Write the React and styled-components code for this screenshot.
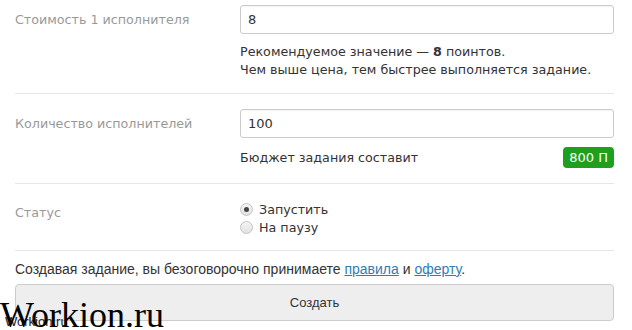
import React from "react";
import styled, { createGlobalStyle } from "styled-components";

const Global = createGlobalStyle`
  html, body { margin: 0; padding: 0; background: #fff; }
  body { width: 632px; height: 330px; overflow: hidden; }
`;

const Page = styled.div`
  position: relative;
  width: 632px;
  height: 330px;
  padding: 0 18px 0 15px;
  box-sizing: border-box;
  font-family: "DejaVu Sans", Verdana, sans-serif;
  font-size: 12.7px;
  color: #333;
`;

const Row = styled.div`
  display: grid;
  grid-template-columns: 225px 1fr;
  align-items: start;
  padding: ${(p) => p.$pad};
  border-bottom: 1px solid #e6e6e6;
`;

const Label = styled.div`
  color: #999;
  line-height: 18px;
  padding-top: ${(p) => p.$top || 0}px;
`;

const Field = styled.div`
  display: flex;
  flex-direction: column;
`;

const Input = styled.div`
  height: 29px;
  box-sizing: border-box;
  border: 1px solid #ccc;
  border-radius: 3px;
  padding: 0 7px;
  display: flex;
  align-items: center;
  font-size: 13px;
  color: #333;
  box-shadow: inset 0 1px 1px rgba(0, 0, 0, 0.05);
`;

const Help = styled.div`
  margin-top: 9px;
  line-height: 18px;
  color: #333;
  b { font-weight: bold; }
`;

const Budget = styled.div`
  margin-top: 9px;
  display: flex;
  justify-content: space-between;
  align-items: center;
  line-height: 18px;
`;

const Badge = styled.span`
  background: #1ea01e;
  color: #fff;
  border-radius: 4px;
  height: 21px;
  padding: 0 6px;
  font-size: 13px;
  display: inline-flex;
  align-items: center;
`;

const Radios = styled.div`
  display: flex;
  flex-direction: column;
`;

const RadioLine = styled.label`
  display: flex;
  align-items: center;
  height: 18px;
  gap: 6px;
`;

const Circle = styled.span`
  width: 11px;
  height: 11px;
  border-radius: 50%;
  border: 1px solid #c4c4c4;
  background: linear-gradient(#f4f4f4, #e2e2e2);
  display: inline-flex;
  align-items: center;
  justify-content: center;
  &::after {
    content: "";
    width: 5px;
    height: 5px;
    border-radius: 50%;
    background: ${(p) => (p.$on ? "#444" : "transparent")};
  }
`;

const Agree = styled.div`
  font-family: "Liberation Sans", Arial, sans-serif;
  font-size: 14px;
  line-height: 18px;
  padding-top: 9px;
  color: #333;
  a { color: #2f7db3; text-decoration: underline; }
`;

const Button = styled.div`
  margin-top: 6px;
  height: 37px;
  box-sizing: border-box;
  border: 1px solid #ccc;
  border-radius: 4px;
  background: #eee;
  display: flex;
  align-items: center;
  justify-content: center;
  font-family: "Liberation Sans", Arial, sans-serif;
  font-size: 13px;
  color: #333;
`;

const Watermark = styled.div`
  position: absolute;
  left: 0;
  top: 297px;
  font-family: "Liberation Serif", "Times New Roman", serif;
  font-size: 36px;
  line-height: 36px;
  color: #000;
`;

const SmallMark = styled.div`
  position: absolute;
  left: 5px;
  top: 314px;
  font-family: "Liberation Sans", Arial, sans-serif;
  font-size: 13px;
  color: #222;
`;

export default function App() {
  return (
    <>
      <Global />
      <Page>
        <Row $pad="5px 0 14px">
          <Label $top={6}>Стоимость 1 исполнителя</Label>
          <Field>
            <Input>8</Input>
            <Help>
              Рекомендуемое значение — <b>8</b> поинтов.
              <br />
              Чем выше цена, тем быстрее выполняется задание.
            </Help>
          </Field>
        </Row>
        <Row $pad="15px 0 15px">
          <Label $top={6}>Количество исполнителей</Label>
          <Field>
            <Input>100</Input>
            <Budget>
              <span>Бюджет задания составит</span>
              <Badge>800 П</Badge>
            </Budget>
          </Field>
        </Row>
        <Row $pad="16px 0 14px">
          <Label $top={4}>Статус</Label>
          <Radios>
            <RadioLine>
              <Circle $on />
              Запустить
            </RadioLine>
            <RadioLine>
              <Circle />
              На паузу
            </RadioLine>
          </Radios>
        </Row>
        <Agree>
          Создавая задание, вы безоговорочно принимаете <a>правила</a> и <a>оферту</a>.
        </Agree>
        <Button>Создать</Button>
        <SmallMark>Workion.ru</SmallMark>
        <Watermark>Workion.ru</Watermark>
      </Page>
    </>
  );
}
